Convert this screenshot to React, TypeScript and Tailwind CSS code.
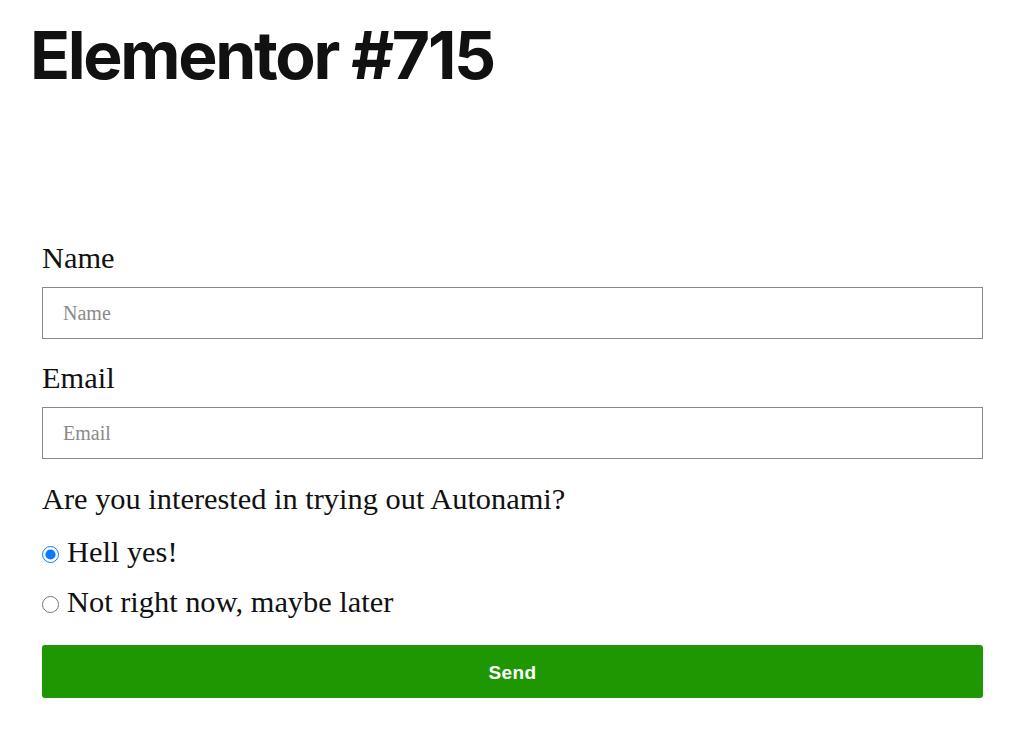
import { useState } from 'react'

const options = [
  { v: 'yes', label: 'Hell yes!' },
  { v: 'later', label: 'Not right now, maybe later' },
]

export default function App() {
  const [choice, setChoice] = useState('yes')

  return (
    <div className="min-h-screen bg-white">
      <h1 className="mt-[22px] h-[66px] px-[30px] font-['Inter',sans-serif] text-[66px] font-bold leading-[66px] tracking-[-0.035em] text-[#111]">
        Elementor #715
      </h1>

      <form
        className="mt-[155px] pl-[42px] pr-[41px] pb-[40px] font-['Liberation_Serif',serif] text-[#111]"
        onSubmit={(e) => e.preventDefault()}
      >
        {/* Name */}
        <label className="block text-[30.4px] leading-[30px]">Name</label>
        <input
          placeholder="Name"
          className="mt-[14px] block h-[52px] w-full border border-[#8a8a8a] px-[20px] text-[20px] outline-none placeholder:text-[#8a8a8a]"
        />

        {/* Email */}
        <label className="mt-[24px] block text-[30.4px] leading-[30px]">Email</label>
        <input
          placeholder="Email"
          className="mt-[14px] block h-[52px] w-full border border-[#8a8a8a] px-[20px] text-[20px] outline-none placeholder:text-[#8a8a8a]"
        />

        {/* Radio */}
        <p className="mt-[25px] text-[30.4px] leading-[30px]">Are you interested in trying out Autonami?</p>

        <div className="mt-[23px] flex flex-col gap-[20px]">
          {options.map(({ v, label }) => (
            <label key={v} className="flex items-center gap-[8px] text-[30.4px] leading-[30px]">
              <input
                type="radio"
                name="autonami"
                checked={choice === v}
                onChange={() => setChoice(v)}
                className="m-0 h-[17px] w-[17px] shrink-0 translate-y-[2px] accent-[#0a7aff]"
              />
              {label}
            </label>
          ))}
        </div>

        <button
          type="submit"
          className="mt-[28px] flex h-[53px] w-full items-center justify-center rounded-[3px] bg-[#1e9703] pt-[3px] font-['Liberation_Sans',sans-serif] text-[19px] font-bold tracking-[0.02em] text-white"
        >
          Send
        </button>
      </form>
    </div>
  )
}
